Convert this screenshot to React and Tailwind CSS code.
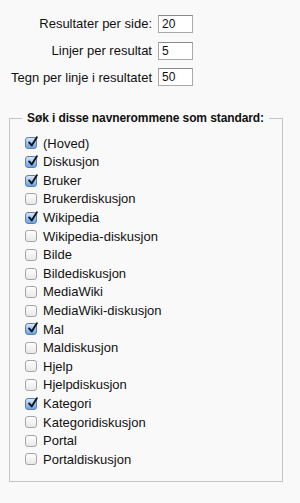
import React from "react";

const items = [
  ["(Hoved)", true],
  ["Diskusjon", true],
  ["Bruker", true],
  ["Brukerdiskusjon", false],
  ["Wikipedia", true],
  ["Wikipedia-diskusjon", false],
  ["Bilde", false],
  ["Bildediskusjon", false],
  ["MediaWiki", false],
  ["MediaWiki-diskusjon", false],
  ["Mal", true],
  ["Maldiskusjon", false],
  ["Hjelp", false],
  ["Hjelpdiskusjon", false],
  ["Kategori", true],
  ["Kategoridiskusjon", false],
  ["Portal", false],
  ["Portaldiskusjon", false],
];

function Box({ checked }) {
  if (checked) {
    return (
      <span className="relative inline-block w-[12px] h-[12px] rounded-[3px] border border-[#5a7fb0] bg-gradient-to-b from-[#d6e8fb] via-[#9cc2ef] to-[#6ca3e6] shrink-0">
        <svg viewBox="0 0 14 14" className="absolute left-[1px] top-[-2px] w-[12px] h-[12px]">
          <path d="M2.5 7.5 L5.5 11 L11.5 1.5" fill="none" stroke="#111" strokeWidth="2.2" strokeLinecap="round" strokeLinejoin="round" />
        </svg>
      </span>
    );
  }
  return (
    <span className="inline-block w-[12px] h-[12px] rounded-[3px] border border-[#a5a5a5] bg-gradient-to-b from-[#ffffff] to-[#e8e8e8] shrink-0" />
  );
}

function Field({ label, value }) {
  return (
    <div className="flex items-center h-[18px]">
      <div className="w-[152px] text-right text-[13px] text-[#111] whitespace-nowrap">{label}</div>
      <div className="ml-[6px] w-[35px] h-[18px] border border-[#a9a9a9] border-t-[#8a8a8a] bg-white text-[12px] leading-[16px] pl-[3px] text-[#111]">
        {value}
      </div>
    </div>
  );
}

export default function App() {
  return (
    <div className="w-[300px] h-[503px] bg-[#f9f9f9] overflow-hidden" style={{ fontFamily: '"Liberation Sans", Arial, sans-serif' }}>
      <div className="pt-[15px] flex flex-col gap-[8.7px]">
        <Field label="Resultater per side:" value="20" />
        <Field label="Linjer per resultat" value="5" />
        <Field label="Tegn per linje i resultatet" value="50" />
      </div>
      <fieldset className="ml-[9px] mt-[24px] w-[274px] border border-[#c4c4c4] pl-[12px] pr-[12px] pb-[12px]">
        <legend className="px-[5px] text-[12px] tracking-[-0.1px] font-bold leading-[16px] text-[#111] whitespace-nowrap">
          Søk i disse navnerommene som standard:
        </legend>
        <div className="pt-[7.7px] flex flex-col">
          {items.map(([label, checked]) => (
            <div key={label} className="flex items-center h-[18.6px] pl-[3px]">
              <Box checked={checked} />
              <span className="ml-[6px] text-[13px] text-[#111]">{label}</span>
            </div>
          ))}
        </div>
      </fieldset>
    </div>
  );
}
